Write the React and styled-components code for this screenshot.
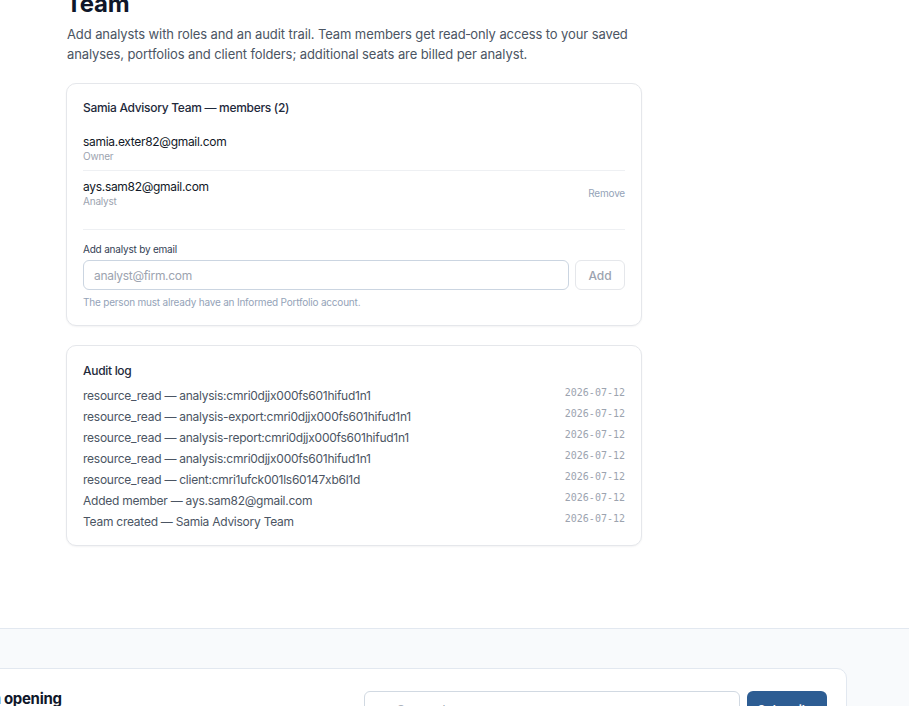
import React from "react";
import styled, { createGlobalStyle } from "styled-components";

const GlobalStyle = createGlobalStyle`
	body {
		margin: 0;
		background: #ffffff;
		font-family: Inter, "Noto Sans", sans-serif;
		color: #111827;
		overflow: hidden;
	}
`;

const Main = styled.main`
	padding: 0 0 82px 66px;
	margin-top: -12px;
	width: 576px;
`;

const Heading = styled.h1`
	margin: 0 0 4px;
	font-size: 24px;
	line-height: 32px;
	font-weight: 700;
	letter-spacing: -0.3px;
	color: #0f172a;
`;

const Lead = styled.p`
	margin: 0 0 19px 1px;
	font-size: 13px;
	line-height: 20px;
	letter-spacing: -0.1px;
	color: #4b5563;
`;

const Card = styled.section`
	border: 1px solid #e5e7eb;
	border-radius: 10px;
	background: #fff;
	box-shadow: 0 1px 2px rgba(15, 23, 42, 0.05);
	padding: ${({ $compact }) => ($compact ? "17px 16px 15px" : "16px 16px 17px")};
	& + & {
		margin-top: 19px;
	}
`;

const CardTitle = styled.h2`
	margin: 0;
	font-size: 12px;
	line-height: 16px;
	font-weight: 500;
	letter-spacing: -0.3px;
	color: #1e293b;
`;

const MemberList = styled.ul`
	list-style: none;
	margin: 10px 0 0;
	padding: 0 0 14px;
	border-bottom: 1px solid #eef0f3;
`;

const Member = styled.li`
	display: flex;
	align-items: center;
	justify-content: space-between;
	padding: 8px 0;
	& + & {
		border-top: 1px solid #eef0f3;
	}
`;

const Email = styled.div`
	font-size: 12px;
	line-height: 16px;
	letter-spacing: -0.3px;
	color: #111827;
`;

const Role = styled.div`
	font-size: 10px;
	line-height: 12px;
	letter-spacing: -0.2px;
	color: #9ca3af;
`;

const TextButton = styled.button`
	border: 0;
	background: none;
	padding: 0;
	font: inherit;
	font-size: 10px;
	letter-spacing: -0.2px;
	color: #94a3b8;
	cursor: pointer;
`;

const AddForm = styled.form`
	padding-top: 12px;
`;

const Label = styled.label`
	display: block;
	font-size: 10px;
	line-height: 14px;
	letter-spacing: -0.2px;
	color: #334155;
	margin-bottom: 4px;
`;

const Row = styled.div`
	display: flex;
	gap: 6px;
`;

const Input = styled.input`
	flex: 1;
	height: 30px;
	box-sizing: border-box;
	border: 1px solid #cbd5e1;
	border-radius: 6px;
	padding: 0 10px;
	font: inherit;
	font-size: 12px;
	letter-spacing: -0.3px;
	color: #111827;
	outline: none;
	&::placeholder {
		color: #9ca3af;
	}
`;

const GhostButton = styled.button`
	width: 50px;
	height: 30px;
	border: 1px solid #e5e7eb;
	border-radius: 6px;
	background: #fff;
	font: inherit;
	font-size: 12px;
	font-weight: 500;
	color: #9ca3af;
`;

const Hint = styled.p`
	margin: 6px 0 0;
	font-size: 10px;
	line-height: 12px;
	letter-spacing: -0.2px;
	color: #94a3b8;
`;

const LogList = styled.ul`
	list-style: none;
	margin: 9px 0 0;
	padding: 0;
	display: grid;
	gap: 5px;
`;

const LogItem = styled.li`
	display: flex;
	align-items: flex-start;
	justify-content: space-between;
	font-size: 12px;
	line-height: 16px;
	letter-spacing: -0.25px;
	color: #4b5563;
`;

const LogDate = styled.span`
	font-family: "DejaVu Sans Mono", monospace;
	font-size: 10px;
	line-height: 12px;
	letter-spacing: 0;
	color: #9ca3af;
	margin-top: -1px;
`;

const Footer = styled.footer`
	border-top: 1px solid #e2e8f0;
	background: #f8fafc;
	padding: 39px 0 40px;
`;

const FooterCard = styled.div`
	margin-left: -260px;
	width: 1107px;
	box-sizing: border-box;
	background: #fff;
	border: 1px solid #e2e8f0;
	border-radius: 10px;
	padding: 20px 19px 22px 24px;
	display: flex;
	align-items: flex-start;
	justify-content: space-between;
`;

const FooterTitle = styled.h3`
	margin: 0;
	font-size: 15px;
	line-height: 20px;
	font-weight: 700;
	letter-spacing: -0.3px;
	color: #0f172a;
`;

const FooterText = styled.p`
	margin: 4px 0 0;
	font-size: 13px;
	line-height: 18px;
	color: #64748b;
`;

const SubscribeRow = styled.div`
	display: flex;
	gap: 7px;
	margin-top: 2px;
`;

const SubscribeInput = styled(Input)`
	flex: none;
	width: 376px;
	height: 36px;
	border-color: #d1d9e2;
`;

const SubscribeButton = styled.button`
	width: 80px;
	height: 36px;
	border: 0;
	border-radius: 6px;
	background: #2d5d93;
	color: #fff;
	font: inherit;
	font-size: 12px;
	font-weight: 600;
`;

const members = [
	{ email: "samia.exter82@gmail.com", role: "Owner" },
	{ email: "ays.sam82@gmail.com", role: "Analyst", removable: true },
];

const log = [
	"resource_read — analysis:cmri0djjx000fs601hifud1n1",
	"resource_read — analysis-export:cmri0djjx000fs601hifud1n1",
	"resource_read — analysis-report:cmri0djjx000fs601hifud1n1",
	"resource_read — analysis:cmri0djjx000fs601hifud1n1",
	"resource_read — client:cmri1ufck001ls60147xb6l1d",
	"Added member — ays.sam82@gmail.com",
	"Team created — Samia Advisory Team",
];

export default function App() {
	return (
		<>
			<GlobalStyle />
			<Main>
				<Heading>Team</Heading>
				<Lead>
					Add analysts with roles and an audit trail. Team members get
					read‑only access to your saved analyses, portfolios and client
					folders; additional seats are billed per analyst.
				</Lead>

				<Card>
					<CardTitle>Samia Advisory Team — members (2)</CardTitle>
					<MemberList>
						{members.map((m) => (
							<Member key={m.email}>
								<div>
									<Email>{m.email}</Email>
									<Role>{m.role}</Role>
								</div>
								{m.removable && <TextButton>Remove</TextButton>}
							</Member>
						))}
					</MemberList>
					<AddForm onSubmit={(e) => e.preventDefault()}>
						<Label htmlFor="analyst-email">Add analyst by email</Label>
						<Row>
							<Input id="analyst-email" placeholder="analyst@firm.com" />
							<GhostButton>Add</GhostButton>
						</Row>
						<Hint>The person must already have an Informed Portfolio account.</Hint>
					</AddForm>
				</Card>

				<Card $compact>
					<CardTitle>Audit log</CardTitle>
					<LogList>
						{log.map((entry, i) => (
							<LogItem key={i}>
								<span>{entry}</span>
								<LogDate>2026-07-12</LogDate>
							</LogItem>
						))}
					</LogList>
				</Card>
			</Main>

			<Footer>
				<FooterCard>
					<div>
						<FooterTitle>Join the waitlist for the Team plan opening</FooterTitle>
						<FooterText>We will email you once new seats are available.</FooterText>
					</div>
					<SubscribeRow>
						<SubscribeInput placeholder="you@example.com" />
						<SubscribeButton>Subscribe</SubscribeButton>
					</SubscribeRow>
				</FooterCard>
			</Footer>
		</>
	);
}
